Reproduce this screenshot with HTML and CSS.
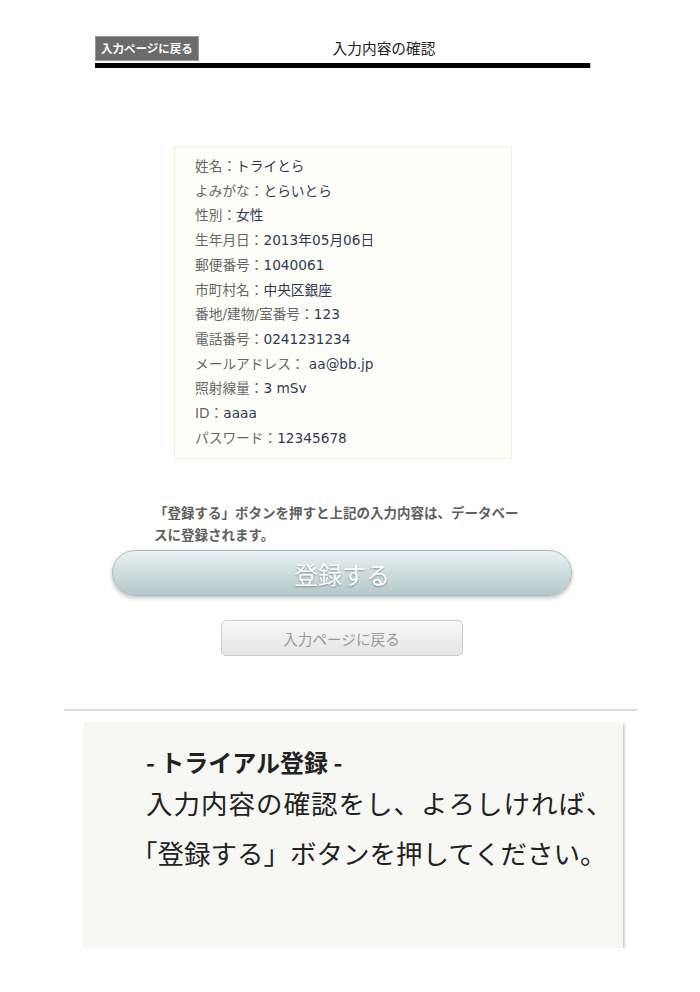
FILE: index.html
```html
<!DOCTYPE html>
<html lang="ja">
<head>
<meta charset="utf-8">
<link rel="stylesheet" href="styles.css">
</head>
<body>
<div class="page">
  <header class="head">
    <a class="back-small">入力ページに戻る</a>
    <h1 class="title">入力内容の確認</h1>
  </header>
  <div class="bar"></div>

  <div class="info">
    <p><span class="lbl">姓名：</span><span class="val">トライとら</span></p>
    <p><span class="lbl">よみがな：</span><span class="val">とらいとら</span></p>
    <p><span class="lbl">性別：</span><span class="val">女性</span></p>
    <p><span class="lbl">生年月日：</span><span class="val">2013年05月06日</span></p>
    <p><span class="lbl">郵便番号：</span><span class="val">1040061</span></p>
    <p><span class="lbl">市町村名：</span><span class="val">中央区銀座</span></p>
    <p><span class="lbl">番地/建物/室番号：</span><span class="val">123</span></p>
    <p><span class="lbl">電話番号：</span><span class="val">0241231234</span></p>
    <p><span class="lbl">メールアドレス：</span><span class="val"> aa@bb.jp</span></p>
    <p><span class="lbl">照射線量：</span><span class="val">3 mSv</span></p>
    <p><span class="lbl">ID：</span><span class="val">aaaa</span></p>
    <p><span class="lbl">パスワード：</span><span class="val">12345678</span></p>
  </div>

  <p class="note">「登録する」ボタンを押すと上記の入力内容は、データベースに登録されます。</p>
  <div class="btn-row"><button class="submit">登録する</button></div>
  <div class="btn-row"><button class="back">入力ページに戻る</button></div>
</div>

<hr class="rule">

<div class="guide">
  <p class="guide-title">- トライアル登録 -</p>
  <p class="guide-text guide-text-1">入力内容の確認をし、よろしければ、</p>
  <p class="guide-text guide-text-2">「登録する」ボタンを押してください。</p>
</div>
</body>
</html>
```

FILE: styles.css
```css
* { box-sizing: border-box; }
body {
  margin: 0;
  background: #fff;
  font-family: "Noto Sans CJK JP", sans-serif;
  color: #333;
}
.page {
  width: 496px;
  margin-left: 95px;
  padding-top: 37px;
}
.head {
  display: flex;
  align-items: center;
  height: 23px;
  position: relative;
}
.back-small {
  display: block;
  background: #6b6b6b;
  color: #fff;
  font-size: 11.5px;
  font-weight: bold;
  line-height: 23px;
  padding: 0 5px;
  border: 1px solid #999;
}
.title {
  position: absolute;
  left: 0;
  right: 0;
  top: 0;
  margin: 0;
  padding-left: 82px;
  text-align: center;
  font-size: 14.7px;
  font-weight: normal;
  line-height: 21px;
  color: #222;
  pointer-events: none;
}
.bar {
  margin-top: 3px;
  height: 5px;
  background: #000;
  border-right: 1px solid #bbb;
}
.info {
  width: 338px;
  margin: 79px 0 0 79px;
  background: #fefef9;
  border: 1px solid #f0f0dc;
  padding: 6px 20px 8px 20px;
}
.info p {
  margin: 0;
  font-family: "DejaVu Sans", "Noto Sans CJK JP", sans-serif;
  font-size: 13.7px;
  line-height: 24.7px;
}
.lbl { color: #666; }
.val { color: #2e3a55; }
.note {
  width: 372px;
  margin: 42px 0 0 59px;
  font-size: 13.5px;
  font-weight: bold;
  line-height: 22px;
  color: #606060;
}
.btn-row {
  display: flex;
  justify-content: center;
}
.submit {
  width: 460px;
  height: 46px;
  margin-top: 5px;
  margin-left: -2px;
  border: 1px solid #a9bcc0;
  border-radius: 23px;
  background: linear-gradient(#e8f2f3, #b4c8cb);
  box-shadow: 0 2px 4px rgba(0, 0, 0, 0.25);
  color: #fff;
  font-family: inherit;
  font-size: 24px;
  text-shadow: 0 1px 2px rgba(0, 0, 0, 0.35);
}
.back {
  width: 242px;
  height: 36px;
  margin-top: 24px;
  margin-left: -3px;
  border: 1px solid #ccc;
  border-radius: 5px;
  background: linear-gradient(#fafafa, #e4e4e4);
  color: #999;
  font-family: inherit;
  font-size: 14.6px;
}
.rule {
  width: 573px;
  margin: 53px 0 0 64px;
  border: 0;
  border-top: 2px solid #ddd;
}
.guide {
  width: 538px;
  height: 226px;
  margin: 11px 0 0 85px;
  background: #f7f7f3;
  box-shadow: 1px 2px 3px rgba(0, 0, 0, 0.3);
  padding: 24px 0 0 61px;
}
.guide p { margin: 0; color: #222; }
.guide .guide-title {
  font-size: 24px;
  font-weight: bold;
  line-height: 32px;
}
.guide .guide-text {
  font-size: 26.5px;
  line-height: 50px;
}
.guide .guide-text-1 {
  letter-spacing: 1px;
}
.guide .guide-text-2 {
  margin-left: -15px;
}
```
